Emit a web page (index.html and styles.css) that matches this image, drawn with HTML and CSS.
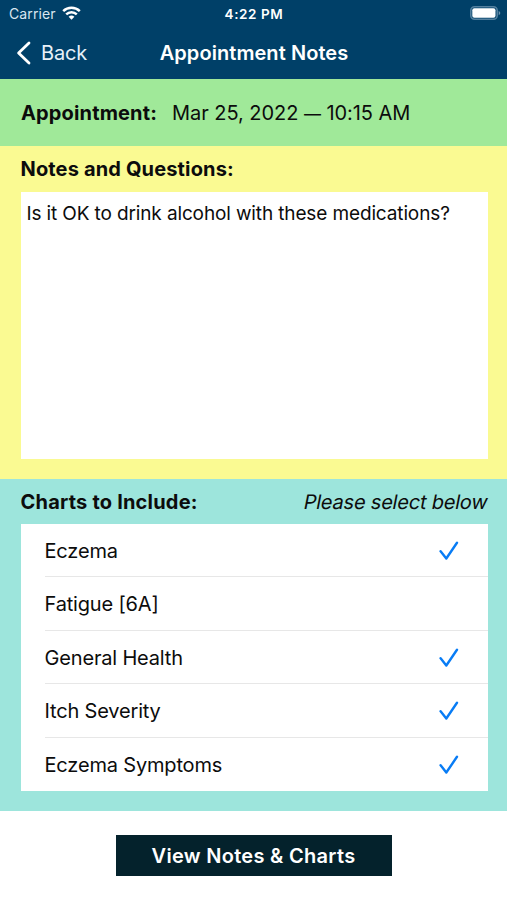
FILE: index.html
```html
<!DOCTYPE html>
<html lang="en">
<head>
<meta charset="utf-8">
<title>Appointment Notes</title>
<link rel="stylesheet" href="styles.css">
</head>
<body>
<header class="top">
  <div class="status">
    <div class="carrier"><span>Carrier</span>
      <svg class="wifi" width="19" height="14" viewBox="0 0 19 14" fill="none" stroke="#fff" stroke-width="2.5"><path d="M1.2 5.1a11.9 11.9 0 0 1 16.6 0M4.2 8.3a7.6 7.6 0 0 1 10.6 0"/><path d="M9.5 13.8 6.6 10.8a4.2 4.2 0 0 1 5.8 0z" fill="#fff" stroke="none"/></svg>
    </div>
    <span class="time">4:22 PM</span>
    <svg class="battery" width="31" height="14" viewBox="0 0 31 14"><rect x=".8" y=".8" width="26.4" height="12.4" rx="3.8" fill="none" stroke="#53809f" stroke-width="1.6"/><rect x="2.3" y="2.3" width="23.2" height="9.4" rx="2" fill="#fff"/><path d="M28.7 4.7q3.2 2.3 0 4.6z" fill="#6f93ae"/></svg>
  </div>
  <nav class="nav">
    <a class="back"><svg width="15" height="24" viewBox="0 0 15 24" fill="none" stroke="#fff" stroke-width="2.8" stroke-linecap="round" stroke-linejoin="round"><path d="M13 2 2.6 12 13 22"/></svg><span class="back-text">Back</span></a>
    <h1 class="title">Appointment Notes</h1>
  </nav>
</header>
<section class="appointment"><b class="appt-label">Appointment:</b><span class="date">Mar 25, 2022 <span class="dash">—</span> 10:15 AM</span></section>
<section class="notes">
  <h2 class="heading">Notes and Questions:</h2>
  <div class="note">Is it OK to drink alcohol with these medications?</div>
</section>
<section class="charts">
  <div class="charts-head"><h2 class="heading charts-heading">Charts to Include:</h2><span class="hint">Please select below</span></div>
  <ul class="list">
    <li class="row"><span>Eczema</span><svg class="check" viewBox="0 0 20 20"><path d="m1.6 10.3 5.7 7.2L18 1.8"/></svg></li>
    <li class="row"><span>Fatigue [6A]</span></li>
    <li class="row"><span>General Health</span><svg class="check" viewBox="0 0 20 20"><path d="m1.6 10.3 5.7 7.2L18 1.8"/></svg></li>
    <li class="row"><span>Itch Severity</span><svg class="check" viewBox="0 0 20 20"><path d="m1.6 10.3 5.7 7.2L18 1.8"/></svg></li>
    <li class="row"><span>Eczema Symptoms</span><svg class="check" viewBox="0 0 20 20"><path d="m1.6 10.3 5.7 7.2L18 1.8"/></svg></li>
  </ul>
</section>
<footer class="footer"><button class="view">View Notes &amp; Charts</button></footer>
</body>
</html>
```
FILE: styles.css
```css
* { box-sizing: border-box; }
body { margin: 0; height: 900px; background: #fff; color: #0c0c0c; font: 20px/26px Inter, "Liberation Sans", sans-serif; letter-spacing: -.17px; white-space: nowrap; overflow: hidden; }
h1, h2, ul { margin: 0; padding: 0; }
.top { height: 79px; background: #004068; color: #fff; }
.status { height: 26px; display: grid; grid-template-columns: 1fr auto 1fr; align-items: center; padding: 1px 6px 0 9px; font-size: 14px; line-height: 20px; letter-spacing: .1px; }
.carrier { display: flex; align-items: center; gap: 6px; color: #d9e6f0; }
.time { font-weight: 600; font-size: 13.5px; letter-spacing: .6px; margin-left: -2px; }
.wifi, .battery { margin-top: -2px; }
.battery { justify-self: end; }
.nav { height: 53px; display: grid; grid-template-columns: 1fr auto 1fr; align-items: center; padding: 0 15px 0 16px; }
.back { display: flex; align-items: center; gap: 10px; }
.back-text { color: #e7f1f8; }
.title { font-size: 20px; font-weight: 600; line-height: 26px; letter-spacing: .07px; }
.appointment { height: 67px; padding: 1px 21px 0; display: flex; align-items: center; gap: 15px; background: #a0e999; }
.appt-label { letter-spacing: .15px; }
.date { letter-spacing: -.05px; }
.dash { font-size: 17px; line-height: 1; }
.notes { height: 332.5px; padding: 10px 19.5px 0 20.5px; background: #fafa92; }
.heading { font-size: 20px; line-height: 26px; font-weight: 700; letter-spacing: .15px; }
.charts-heading { letter-spacing: .2px; }
.note { height: 267px; margin-top: 10px; padding: 9px 6px; background: #fff; font-size: 19px; letter-spacing: -.13px; }
.charts { height: 332px; padding: 10px 19.5px 0 20.5px; background: #9de5dc; }
.charts-head { display: flex; justify-content: space-between; }
.hint { transform: skewX(-11deg); letter-spacing: -.2px; }
.list { height: 267px; margin-top: 9.5px; padding-left: 24px; background: #fff; list-style: none; }
.row { height: 53.7px; display: flex; align-items: center; justify-content: space-between; padding: 1px 29px 0 0; border-bottom: 1px solid #e7e7e7; }
.row:first-child { height: 53px; }
.row:last-child { border-bottom: 0; }
.check { width: 20px; height: 20px; fill: none; stroke: #087cf5; stroke-width: 2.4; stroke-linecap: round; stroke-linejoin: round; }
.footer { display: flex; justify-content: center; padding-top: 24.5px; }
.view { width: 276px; height: 40.5px; border: 0; padding: 1px 0 0; background: #04222c; color: #fff; font: 600 20px/26px Inter, sans-serif; letter-spacing: .3px; }
```
